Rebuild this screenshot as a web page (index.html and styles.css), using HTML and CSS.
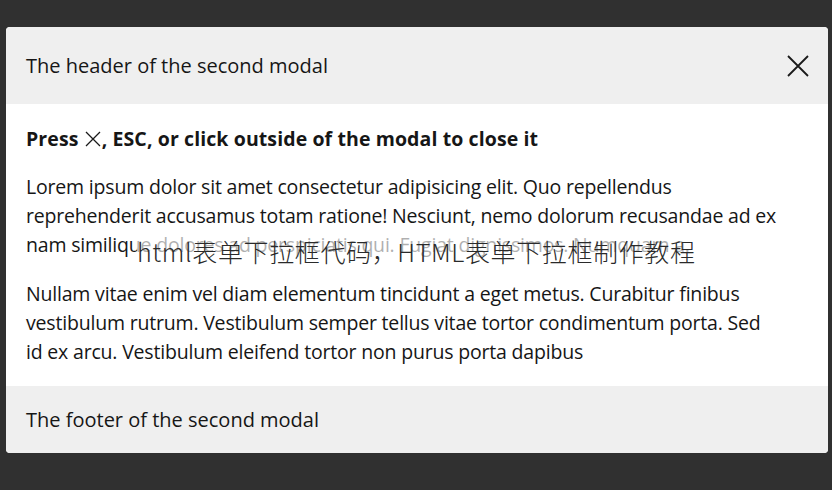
FILE: index.html
```html
<!DOCTYPE html>
<html lang="en">
<head>
<meta charset="utf-8">
<title>Modal</title>
<link rel="stylesheet" href="styles.css">
</head>
<body>
<div class="modal">
  <div class="modal-header">
    <span class="title">The header of the second modal</span>
    <span class="close" aria-label="close">
      <svg width="22" height="22" viewBox="0 0 22 22"><path d="M1 1L21 21M21 1L1 21" stroke="#1a1a1a" stroke-width="1.8" fill="none"/></svg>
    </span>
  </div>
  <div class="modal-body">
    <p class="lead">Press <svg class="x" width="18" height="16" viewBox="0 0 18 16"><path d="M2 1L16 15M16 1L2 15" stroke="#1a1a1a" stroke-width="1.3" fill="none"/></svg>, ESC, or click outside of the modal to close it</p>
    <p>Lorem ipsum dolor sit amet consectetur adipisicing elit. Quo repellendus<br>reprehenderit accusamus totam ratione! Nesciunt, nemo dolorum recusandae ad ex<br>nam similique dolores ad perspiciatis qui. Fugiat dignissimos. Numquam a.</p>
    <p>Nullam vitae enim vel diam elementum tincidunt a eget metus. Curabitur finibus<br>vestibulum rutrum. Vestibulum semper tellus vitae tortor condimentum porta. Sed<br>id ex arcu. Vestibulum eleifend tortor non purus porta dapibus</p>
    <div class="watermark">html表单下拉框代码，HTML表单下拉框制作教程</div>
  </div>
  <div class="modal-footer">The footer of the second modal</div>
</div>
</body>
</html>
```

FILE: styles.css
```css
html, body {
  margin: 0;
  padding: 0;
}
body {
  background: #303030;
  height: 490px;
  overflow: hidden;
  font-family: "Open Sans", "Noto Sans", sans-serif;
  font-size: 19.5px;
  letter-spacing: -0.19px;
  line-height: 29px;
  color: #161616;
}
.modal {
  margin: 27px 4px 0 6px;
  background: #fff;
  border-radius: 4px;
  overflow: hidden;
}
.modal-header {
  background: #efefef;
  display: flex;
  align-items: center;
  justify-content: space-between;
  padding: 24px 19px 24px 20px;
  font-size: 20px;
  letter-spacing: 0;
}
.close {
  display: flex;
  width: 22px;
  height: 22px;
}
.modal-body {
  position: relative;
  padding: 20px;
}
.modal-body p {
  margin: 0 0 20px;
  white-space: nowrap;
}
.modal-body p:last-of-type {
  margin-bottom: 0;
}
.modal-body .lead {
  font-weight: 700;
  letter-spacing: 0.1px;
  margin-bottom: 19px;
}
.x {
  vertical-align: -1px;
}
.watermark {
  position: absolute;
  left: 131px;
  top: 129px;
  padding-right: 14px;
  background: rgba(255, 255, 255, 0.66);
  font-family: "Noto Sans CJK SC", "Noto Sans", sans-serif;
  font-weight: 300;
  font-size: 25px;
  letter-spacing: 0.63px;
  line-height: 36px;
  color: #2a2a2a;
}
.modal-footer {
  background: #efefef;
  padding: 19px 20px;
  font-size: 20px;
  letter-spacing: 0;
}
```
